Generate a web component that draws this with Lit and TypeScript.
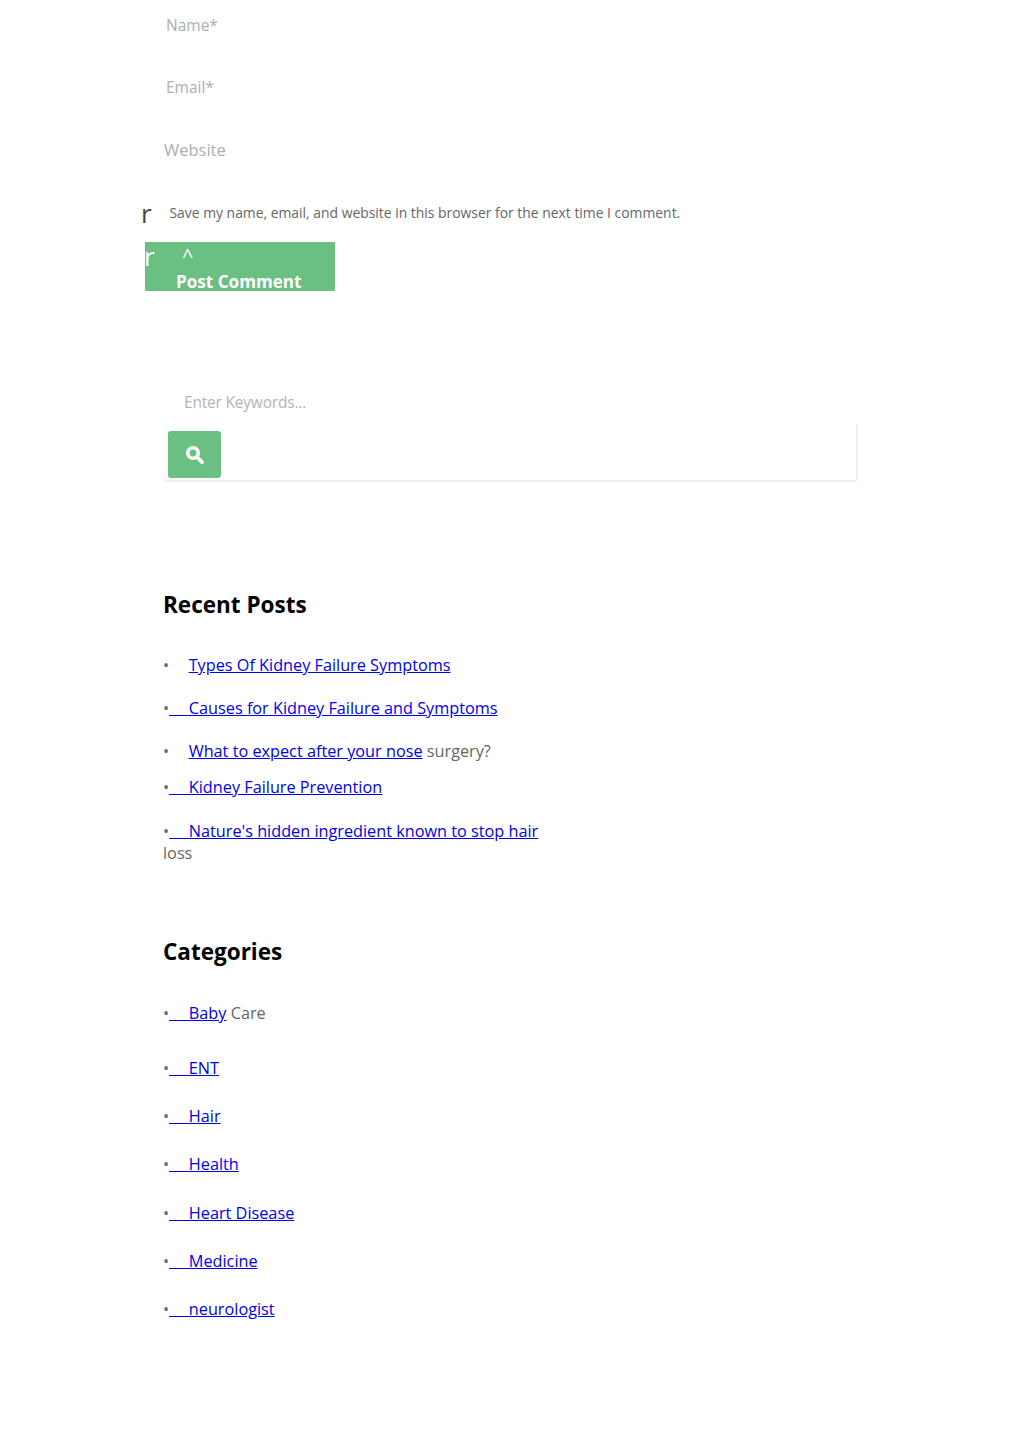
import { LitElement, html, css } from "lit";
import { customElement } from "lit/decorators.js";

const NB = "\u00a0\u00a0\u00a0\u00a0";

@customElement("app-root")
export class AppRoot extends LitElement {
  static styles = css`
    :host { display: block; height: 1449px; overflow: hidden; background: #fff; font-family: "Open Sans", "Noto Sans", sans-serif; color: #666; font-size: 16.25px; }
    .form { padding: 15px 0 0 145px; }
    .ph { color: #aeaeae; font-size: 15.5px; line-height: 20px; height: 62px; padding-left: 21px; box-sizing: border-box; }
    .ph.web { padding: 1px 0 0 19px; font-size: 16.5px; height: 51px; }
    .save { display: flex; align-items: flex-start; box-sizing: border-box; height: 52px; padding-top: 8px; font-size: 13.9px; line-height: 30px; color: #666; margin-left: -4px; }
    .save .r { font-size: 26px; line-height: 31px; width: 28.5px; color: #444; }
    .btn { width: 190px; height: 49px; background: #6abf83; color: #fff; position: relative; }
    .btn .r { position: absolute; left: -1px; top: -3px; font-size: 26px; line-height: 34px; }
    .btn .c { position: absolute; left: 37px; top: 0; font-size: 20px; line-height: 28px; }
    .btn .t { position: absolute; left: 31px; top: 31px; font-weight: 700; font-size: 17.1px; line-height: 18px; }
    .search { margin: 100px 0 0 166px; width: 692px; }
    .kw { color: #b4b4b4; font-size: 15.5px; line-height: 22px; padding-left: 18px; height: 33px; letter-spacing: -0.2px; }
    .box { height: 58px; box-sizing: border-box; padding: 7px 0 0 2px; border-right: 2px solid #f0f0f0; border-bottom: 2px solid #f0f0f0; border-radius: 0 0 4px 0; box-shadow: -1px 0 0 #f6f6f6; }
    .sb { width: 53px; height: 47px; background: #6abf83; border-radius: 3px; display: flex; align-items: center; justify-content: center; }
    .wid { padding-left: 163px; }
    h2 { margin: 0; color: #000; font-size: 22.5px; font-weight: 700; line-height: 32px; }
    a { color: #0000ee; text-decoration: underline; }
    .row { line-height: 24px; }
    .row.wrap { line-height: 22px; width: 400px; margin-top: 21px; }
    .dot { color: #666; }
    .sp { letter-spacing: 0.7px; }
    .gap { display: inline-block; width: 19.5px; }
  `;
  private plain(href: string, rest = "") {
    return html`<span class="dot">•</span><span class="gap"></span><a href="#">${href}</a>${rest}`;
  }
  private link(t: string, rest = "") {
    return html`<span class="dot">•</span><a href="#"><span class="sp">${NB}</span>${t}</a>${rest}`;
  }
  render() {
    const cats = ["ENT", "Hair", "Health", "Heart Disease", "Medicine", "neurologist"];
    return html`
      <div class="form">
        <div class="ph">Name*</div>
        <div class="ph">Email*</div>
        <div class="ph web">Website</div>
        <div class="save"><span class="r">r</span><span>Save my name, email, and website in this browser for the next time I comment.</span></div>
        <div class="btn"><span class="r">r</span><span class="c">^</span><span class="t">Post Comment</span></div>
      </div>
      <div class="search">
        <div class="kw">Enter Keywords...</div>
        <div class="box"><div class="sb">
          <svg width="20" height="20" viewBox="0 0 20 20" fill="none" stroke="#fff"><circle cx="8" cy="8" r="5.2" stroke-width="3.6"/><path d="M12.5 12.5l4.6 4.6" stroke-width="3.8" stroke-linecap="round"/></svg>
        </div></div>
      </div>
      <div class="wid" style="margin-top:107px">
        <h2>Recent Posts</h2>
        <div class="row" style="margin-top:32px">${this.plain("Types Of Kidney Failure Symptoms")}</div>
        <div class="row" style="margin-top:19px">${this.link("Causes for Kidney Failure and Symptoms")}</div>
        <div class="row" style="margin-top:19px">${this.plain("What to expect after your nose", " surgery?")}</div>
        <div class="row" style="margin-top:12px">${this.link("Kidney Failure Prevention")}</div>
        <div class="row wrap">${this.link("Nature's hidden ingredient known to stop hair")} loss</div>
        <h2 style="margin-top:72px">Categories</h2>
        <div class="row" style="margin-top:33px">${this.link("Baby")} Care</div>
        ${cats.map((t, i) => html`<div class="row" style="margin-top:${i === 0 ? 31 : 24.2}px">${this.link(t)}</div>`)}
      </div>
    `;
  }
}
